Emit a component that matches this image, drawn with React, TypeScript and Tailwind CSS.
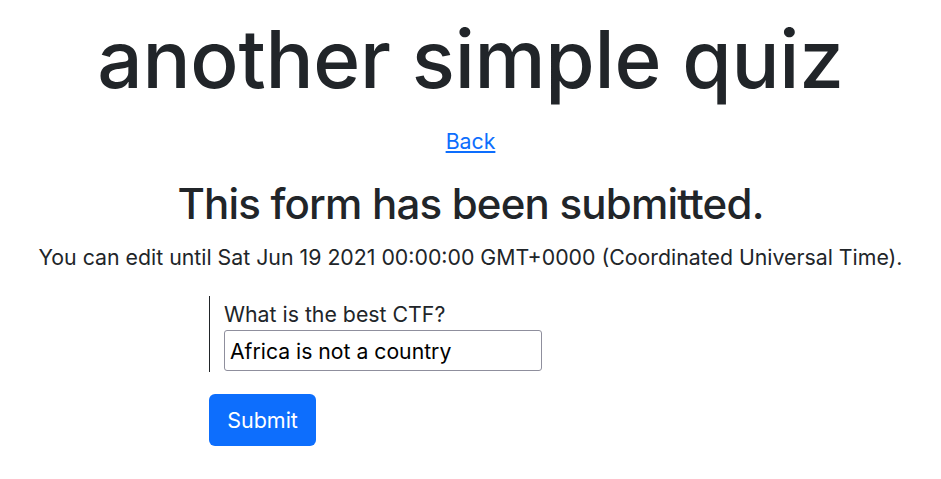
import React from 'react'

export default function App() {
  return (
    <div
      className="min-h-[479px] bg-white text-[#212529]"
      style={{ fontFamily: 'Inter, "Liberation Sans", Arial, sans-serif' }}
    >
      {/* 标题 */}
      <h1 className="pt-[8px] text-center text-[80px] leading-[102px] font-medium tracking-[-0.25px]">
        another simple quiz
      </h1>

      {/* 返回链接 */}
      <div className="mt-[16px] text-center text-[21.3px] leading-[30px]">
        <a href="#" className="text-[#0d6efd] underline">Back</a>
      </div>

      <h2 className="mt-[22px] text-center text-[42px] leading-[52px] font-medium tracking-[-0.8px]">
        This form has been submitted.
      </h2>

      <p className="mt-[12px] text-center text-[21.3px] leading-[30px]">
        You can edit until Sat Jun 19 2021 00:00:00 GMT+0000 (Coordinated Universal Time).
      </p>

      {/* 表单 */}
      <form className="mx-auto mt-[24px] w-[523px]" onSubmit={e => e.preventDefault()}>
        <div className="flex flex-col border-l border-[#212529] pl-[14px] pt-[3px] pb-[1px]">
          <label className="text-[21.3px] leading-[30px]">What is the best CTF?</label>
          <input
            className="mt-[1px] h-[41px] w-[318px] rounded-[3px] border border-[#8f8f9d] px-[5px] text-[21.2px] text-black outline-none"
            defaultValue="Africa is not a country"
          />
        </div>
        <button
          type="submit"
          className="mt-[22px] h-[52px] w-[107px] rounded-[6px] bg-[#0d6efd] text-[21.5px] text-white"
        >
          Submit
        </button>
      </form>
    </div>
  )
}
